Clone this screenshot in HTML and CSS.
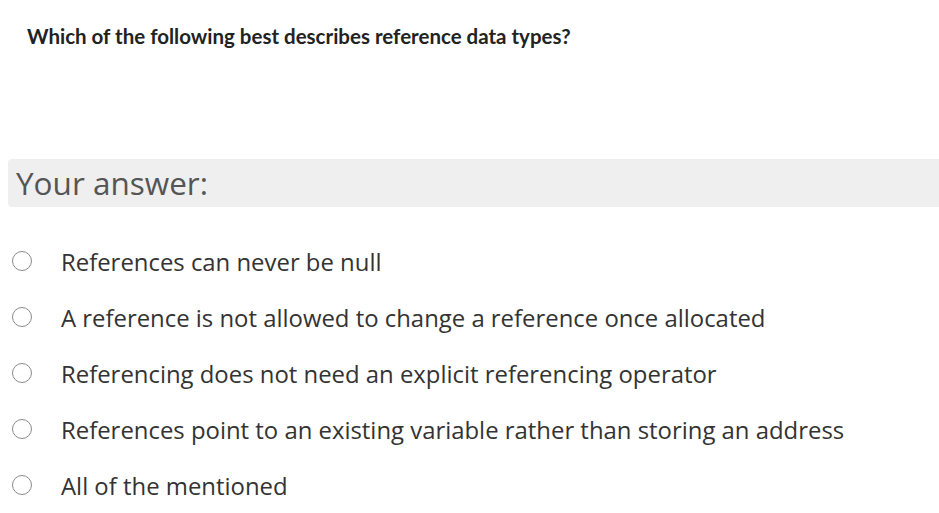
FILE: index.html
```html
<!DOCTYPE html>
<html>
<head>
<meta charset="utf-8">
<link rel="stylesheet" href="styles.css">
</head>
<body>
<div class="page">
  <p class="question">Which of the following best describes reference data types?</p>
  <div class="answer-bar">Your answer:</div>
  <ul class="options">
    <li class="option"><span class="radio"></span><span class="label">References can never be null</span></li>
    <li class="option"><span class="radio"></span><span class="label">A reference is not allowed to change a reference once allocated</span></li>
    <li class="option"><span class="radio"></span><span class="label">Referencing does not need an explicit referencing operator</span></li>
    <li class="option"><span class="radio"></span><span class="label">References point to an existing variable rather than storing an address</span></li>
    <li class="option"><span class="radio"></span><span class="label">All of the mentioned</span></li>
  </ul>
</div>
</body>
</html>
```
FILE: styles.css
```css
html, body {
  margin: 0;
  padding: 0;
  background: #fff;
}
.page {
  padding-top: 22px;
}
.question {
  margin: 0 0 0 27px;
  font-family: Lato, "Open Sans", sans-serif;
  font-weight: 700;
  font-size: 20.5px;
  line-height: 28px;
  color: #222;
}
.answer-bar {
  margin: 109px 0 0 8px;
  height: 48px;
  line-height: 48px;
  background: #efefef;
  border-radius: 4px 0 0 4px;
  padding-left: 8px;
  font-family: "Open Sans", sans-serif;
  font-size: 31.5px;
  color: #555;
}
.options {
  list-style: none;
  margin: 26px 0 0 0;
  padding: 0;
}
.option {
  display: flex;
  align-items: center;
  height: 56px;
}
.radio {
  box-sizing: border-box;
  width: 20px;
  height: 20px;
  border: 1px solid #8a8a8a;
  border-radius: 50%;
  margin-left: 12px;
  flex: none;
}
.label {
  margin-left: 29px;
  font-family: "Open Sans", sans-serif;
  font-size: 23.9px;
  color: #333;
}
```
